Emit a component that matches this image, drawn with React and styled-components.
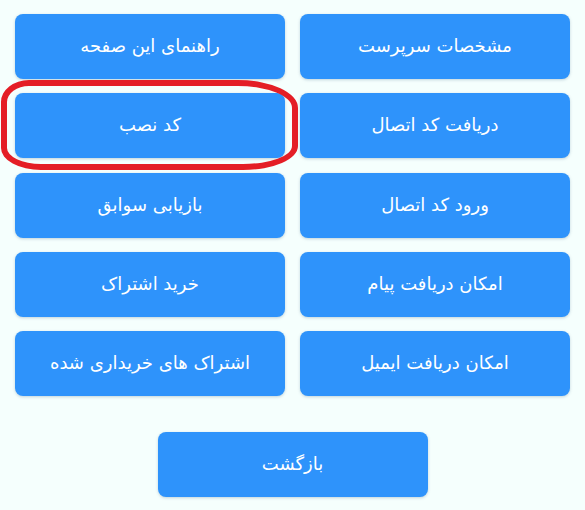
import React from 'react'
import styled, { createGlobalStyle } from 'styled-components'

const GlobalStyle = createGlobalStyle`
  html, body {
    margin: 0;
    padding: 0;
    background: #f5fffd;
  }
  body {
    font-family: 'DejaVu Sans', 'Noto Sans', sans-serif;
  }
`

const Page = styled.div`
  direction: rtl;
  width: 585px;
  height: 510px;
  box-sizing: border-box;
  padding: 14px 15px 0;
  display: flex;
  flex-direction: column;
  align-items: center;
`

const Grid = styled.div`
  display: grid;
  grid-template-columns: 270px 270px;
  column-gap: 15px;
  row-gap: 14.3px;
`

const Button = styled.button`
  width: 270px;
  height: 65px;
  border: none;
  border-radius: 8px;
  background: #2e93fb;
  color: #ffffff;
  font-family: 'DejaVu Sans', 'Noto Sans', sans-serif;
  font-size: 18px;
  box-shadow: 0 1px 3px rgba(40, 80, 120, 0.25);
  cursor: pointer;
  padding: 0 10px 2px;
`

// the red hand-drawn ring around one button
const Marked = styled.div`
  position: relative;
  &::after {
    content: '';
    position: absolute;
    left: -14px;
    top: -13px;
    right: -13px;
    bottom: -12px;
    border: 6px solid #e41e26;
    box-sizing: border-box;
    border-radius: 28px 60px 55px 40px / 22px 28px 24px 22px;
    pointer-events: none;
  }
`

const BackButton = styled(Button)`
  margin-top: 36px;
`

const items = [
  { label: 'مشخصات سرپرست' },
  { label: 'راهنمای این صفحه' },
  { label: 'دریافت کد اتصال' },
  { label: 'کد نصب', marked: true },
  { label: 'ورود کد اتصال' },
  { label: 'بازیابی سوابق' },
  { label: 'امکان دریافت پیام' },
  { label: 'خرید اشتراک' },
  { label: 'امکان دریافت ایمیل' },
  { label: 'اشتراک های خریداری شده' },
]

export default function App() {
  return (
    <>
      <GlobalStyle />
      <Page>
        <Grid>
          {items.map(item =>
            item.marked ? (
              <Marked key={item.label}>
                <Button>{item.label}</Button>
              </Marked>
            ) : (
              <Button key={item.label}>{item.label}</Button>
            )
          )}
        </Grid>
        <BackButton>بازگشت</BackButton>
      </Page>
    </>
  )
}
